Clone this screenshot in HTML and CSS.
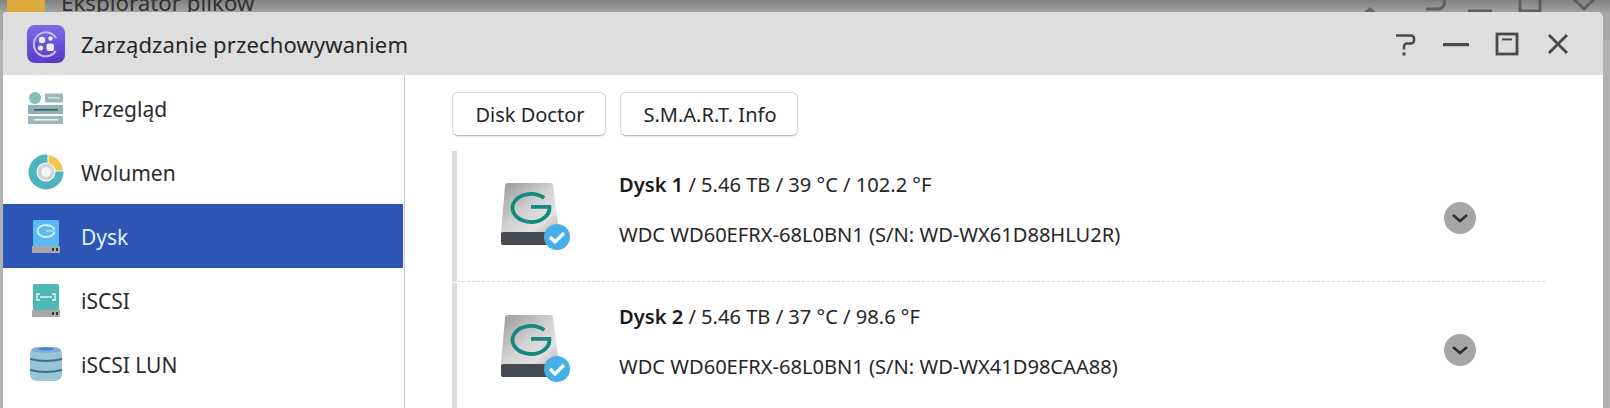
FILE: index.html
```html
<!DOCTYPE html>
<html lang="pl">
<head>
<meta charset="utf-8">
<title>Zarządzanie przechowywaniem</title>
<link rel="stylesheet" href="styles.css">
</head>
<body>
<div class="desktop">
  <div class="back-bar">
    <svg class="back-icon" viewBox="0 0 40 40"><rect x="0" y="0" width="40" height="40" rx="6" fill="#d9a93a"/><rect x="10" y="0" width="20" height="18" fill="#f1e6c4"/><rect x="13" y="7" width="14" height="2" fill="#b89a55"/></svg>
    <span class="back-title">Eksplorator plików</span>
    <svg class="back-tools" viewBox="0 0 300 30"><g fill="none" stroke="#5f5f5f" stroke-width="3"><path d="M128 -4h14a6 6 0 0 1 0 13h-12"/><path d="M172 11h24" stroke-width="3"/><rect x="224" y="-8" width="20" height="19"/><path d="M277 -2l12 12M299 -2l-12 12"/></g><path d="M68 12l6-5 6 5z" fill="#666"/></svg>
  </div>
  <section class="window">
    <header class="titlebar">
      <svg class="app-icon" viewBox="0 0 38 38">
        <defs><linearGradient id="appg" x1="0" y1="0" x2="0" y2="1"><stop offset="0" stop-color="#7b6be8"/><stop offset="1" stop-color="#5a39c9"/></linearGradient></defs>
        <rect width="38" height="38" rx="8" fill="url(#appg)"/>
        <path d="M24 8.4A12 12 0 1 0 31 19" transform="rotate(35 19 19)" fill="none" stroke="#c9bff5" stroke-width="2"/>
        <circle cx="15" cy="15" r="3.2" fill="#efeafd"/><circle cx="23.5" cy="13.5" r="2.2" fill="#efeafd"/><circle cx="13.5" cy="23" r="2.6" fill="#efeafd"/><rect x="19.5" y="18.5" width="7.5" height="7.5" rx="2" fill="#efeafd"/>
      </svg>
      <h1 class="app-title">Zarządzanie przechowywaniem</h1>
      <div class="win-controls">
        <svg viewBox="0 0 24 24" class="ctl"><path d="M3 3.5h15a3 3 0 0 1 3 3v2a3 3 0 0 1-3 3h-4a3 3 0 0 0-3 3v3" fill="none" stroke="#4a4a4a" stroke-width="2.6"/><rect x="9.5" y="20.5" width="3" height="3" fill="#4a4a4a"/></svg>
        <svg viewBox="0 0 24 24" class="ctl"><rect x="-1" y="11" width="26" height="3.2" fill="#4a4a4a"/></svg>
        <svg viewBox="0 0 24 24" class="ctl"><rect x="2" y="2" width="20" height="20" fill="none" stroke="#4a4a4a" stroke-width="2.8"/><rect x="7" y="6.4" width="10" height="2" fill="#4a4a4a"/></svg>
        <svg viewBox="0 0 24 24" class="ctl"><path d="M3 3l18 18M21 3L3 21" fill="none" stroke="#4a4a4a" stroke-width="2.8"/></svg>
      </div>
    </header>
    <div class="body">
      <nav class="sidebar">
        <a class="nav-item">
          <svg class="nav-icon" viewBox="0 0 36 36"><circle cx="7" cy="8" r="6" fill="#7fc0bb"/><rect x="17" y="3.5" width="18" height="9" rx="1" fill="#9bb9bb"/><rect x="20" y="7" width="12" height="1.6" fill="#cde0df"/><rect x="0" y="15" width="35" height="9" fill="#8fb2b4"/><rect x="6" y="19" width="24" height="1.6" fill="#2f6367"/><rect x="0" y="26" width="35" height="8" fill="#9bb9bb"/><rect x="6" y="29" width="24" height="1.6" fill="#e5efef"/></svg>
          <span>Przegląd</span>
        </a>
        <a class="nav-item">
          <svg class="nav-icon" viewBox="0 0 36 36"><circle cx="18" cy="18" r="13.5" fill="none" stroke="#4fb4bd" stroke-width="8"/><path d="M20 0.5A17.5 17.5 0 0 1 35.5 17L27 17A9 9 0 0 0 20 9.5z" fill="#f1c84e" stroke="#fff" stroke-width="1"/><circle cx="18" cy="18" r="8.5" fill="#d2d2da"/><circle cx="18" cy="18" r="4.8" fill="#f6f6f8"/></svg>
          <span>Wolumen</span>
        </a>
        <a class="nav-item is-active">
          <svg class="nav-icon" viewBox="0 0 36 36"><rect x="5" y="2" width="26" height="26" rx="1.5" fill="#5cb9f2"/><ellipse cx="18" cy="13" rx="8.5" ry="6" fill="none" stroke="#d5eefc" stroke-width="2"/><path d="M18 13h9" stroke="#5cb9f2" stroke-width="2"/><path d="M18 13h8" stroke="#d5eefc" stroke-width="1.2"/><rect x="4" y="28" width="28" height="7" fill="#a8a8a8"/><rect x="24" y="30" width="2" height="3" fill="#333"/><rect x="28" y="30" width="2" height="3" fill="#333"/></svg>
          <span>Dysk</span>
        </a>
        <a class="nav-item">
          <svg class="nav-icon" viewBox="0 0 36 36"><rect x="5" y="2" width="26" height="26" rx="1.5" fill="#4fb8b4"/><path d="M12 12h-3v6h3M24 12h3v6h-3M12 15h12" fill="none" stroke="#dff3f2" stroke-width="1.5"/><rect x="4" y="28" width="28" height="7" fill="#a8a8a8"/><rect x="24" y="30" width="2" height="3" fill="#333"/><rect x="28" y="30" width="2" height="3" fill="#333"/></svg>
          <span>iSCSI</span>
        </a>
        <a class="nav-item">
          <svg class="nav-icon" viewBox="0 0 36 36"><rect x="2" y="1" width="32" height="34" rx="7" fill="#98c6d6"/><ellipse cx="18" cy="4" rx="15" ry="3" fill="#7db2d6"/><ellipse cx="18" cy="3" rx="8" ry="1.4" fill="#3f82c9"/><path d="M2 13q16 4 32 0M2 24q16 4 32 0" fill="none" stroke="#3f7085" stroke-width="2"/></svg>
          <span>iSCSI LUN</span>
        </a>
      </nav>
      <main class="content">
        <div class="toolbar">
          <button class="btn btn-doctor">Disk Doctor</button>
          <button class="btn btn-smart">S.M.A.R.T. Info</button>
        </div>
        <div class="disk">
          <svg class="disk-icon" viewBox="0 0 72 72">
            <defs>
              <linearGradient id="hddg" x1="0" y1="0" x2="1" y2="1"><stop offset="0" stop-color="#9a9a9a"/><stop offset=".5" stop-color="#d2d2d2"/><stop offset=".75" stop-color="#e2e2e2"/><stop offset="1" stop-color="#b4b4b4"/></linearGradient>
              <g id="hdd">
                <path d="M5 8q0-3 3-3h42q3 0 3 3l6 46H1z" fill="url(#hddg)"/>
                <path d="M3 54h52v13H3q-2 0-2-2V56q0-2 2-2z" fill="#454b51"/>
                <path d="M44.1 20.1A18.5 14 0 1 0 49.4 28.8H31" fill="none" stroke="#16897f" stroke-width="3.8"/>
                <circle cx="57" cy="59" r="13" fill="#45b0e5"/>
                <path d="M50 59l5 5 9-9" fill="none" stroke="#fff" stroke-width="3.2"/>
              </g>
            </defs>
            <use href="#hdd"/>
          </svg>
          <div class="disk-info">
            <p class="disk-line"><b>Dysk 1</b> / 5.46 TB / 39 °C / 102.2 °F</p>
            <p class="disk-line">WDC WD60EFRX-68L0BN1 (S/N: WD-WX61D88HLU2R)</p>
          </div>
          <span class="expand"><svg viewBox="0 0 32 32"><path d="M9 13l7 6 7-6" fill="none" stroke="#2e2e2e" stroke-width="2.6"/></svg></span>
        </div>
        <div class="disk disk-second">
          <svg class="disk-icon" viewBox="0 0 72 72"><use href="#hdd"/></svg>
          <div class="disk-info">
            <p class="disk-line"><b>Dysk 2</b> / 5.46 TB / 37 °C / 98.6 °F</p>
            <p class="disk-line">WDC WD60EFRX-68L0BN1 (S/N: WD-WX41D98CAA88)</p>
          </div>
          <span class="expand"><svg viewBox="0 0 32 32"><path d="M9 13l7 6 7-6" fill="none" stroke="#2e2e2e" stroke-width="2.6"/></svg></span>
        </div>
      </main>
    </div>
  </section>
</div>
</body>
</html>
```

FILE: styles.css
```css
* { box-sizing: border-box; }
html, body { margin: 0; height: 100%; overflow: hidden; }
body { font-family: "Noto Sans", "Open Sans", sans-serif; color: #222; }
.desktop { position: relative; width: 1610px; height: 408px; overflow: hidden; background: #b2b2b2; }
.back-bar { display: flex; align-items: flex-start; height: 40px; background: linear-gradient(#808080, #a8a8a8 14px); overflow: hidden; }
.back-icon { width: 38px; height: 38px; margin: -18px 0 0 7px; flex: none; }
.back-title { margin: -11px 0 0 16px; font-size: 22.3px; line-height: 28px; color: #303030; }
.back-tools { width: 300px; height: 30px; margin-left: auto; margin-right: 14px; flex: none; overflow: visible; }
.window { position: absolute; left: 3px; top: 12px; width: 1600px; height: 396px; background: #fff; border-radius: 4px 6px 0 0; display: flex; flex-direction: column; overflow: hidden; }
.titlebar { height: 63px; background: #dedede; display: flex; align-items: center; padding: 0 33px 0 24px; flex: none; }
.app-icon { width: 38px; height: 38px; flex: none; }
.app-title { margin: 0 0 0 16px; font-size: 22px; font-weight: 400; color: #262626; letter-spacing: .15px; }
.win-controls { margin-left: auto; display: flex; align-items: center; gap: 27px; }
.ctl { width: 24px; height: 24px; display: block; overflow: visible; }
.body { flex: 1; display: flex; min-height: 0; }
.sidebar { width: 402px; flex: none; border-right: 1px solid #c9c9c9; padding-top: 1px; display: flex; flex-direction: column; }
.nav-item { height: 64px; display: flex; align-items: center; gap: 17px; padding-left: 25px; font-size: 21px; color: #2b2b2b; flex: none; width: 400px; }
.nav-item span { position: relative; top: 1px; }
.nav-item.is-active { background: #2c55b5; color: #dff1ff; }
.nav-icon { width: 36px; height: 36px; flex: none; }
.content { flex: 1; padding: 17px 58px 0 47px; min-width: 0; }
.toolbar { display: flex; gap: 14px; height: 44px; }
.btn { height: 44px; background: #fff; border: 1px solid #d5d5d5; border-bottom-color: #bdbdbd; border-radius: 6px; font: inherit; font-size: 20px; color: #262626; padding: 0 0 0 2px; box-shadow: 0 1px 1px rgba(0,0,0,.08); }
.btn-doctor { width: 154px; }
.btn-smart { width: 178px; }
.disk { margin-top: 15px; height: 131px; border-left: 5px solid #dcdcdc; border-bottom: 1px dashed #d6d6d6; display: flex; align-items: flex-start; }
.disk-second { margin-top: 1px; border-bottom: none; height: 132px; }
.disk-icon { width: 72px; height: 72px; margin: 27px 0 0 43px; flex: none; }
.disk-info { margin: 19px 0 0 47px; display: flex; flex-direction: column; gap: 21px; }
.disk-line { margin: 0; font-size: 20.1px; line-height: 29px; color: #262626; white-space: nowrap; }
.disk-line b { font-weight: 600; color: #1a1a1a; }
.expand { margin: 51px 69px 0 auto; width: 32px; height: 32px; border-radius: 50%; background: #a6a6a6; display: block; flex: none; }
.expand svg { display: block; width: 32px; height: 32px; }
```
